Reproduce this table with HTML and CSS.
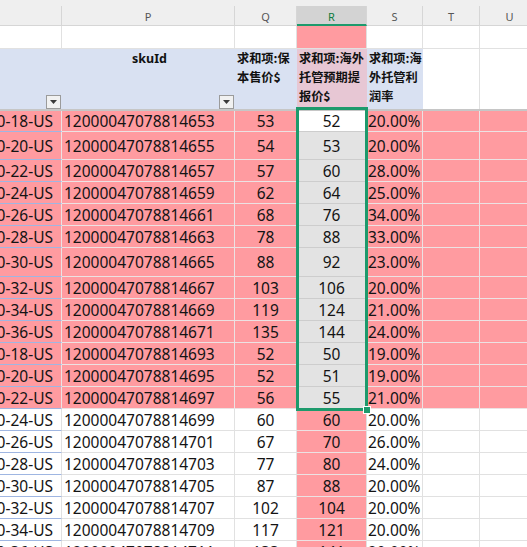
FILE: index.html
```html
<!DOCTYPE html>
<html lang="zh-CN">
<head>
<meta charset="utf-8">
<title>Sheet</title>
<link rel="stylesheet" href="styles.css">
</head>
<body>
<div class="sheet">
  <div class="row colhead">
    <div class="c"></div>
    <div class="c">P</div>
    <div class="c">Q</div>
    <div class="c cur">R</div>
    <div class="c">S</div>
    <div class="c">T</div>
    <div class="c">U</div>
  </div>
  <div class="row r1">
    <div class="c"></div><div class="c"></div><div class="c"></div><div class="c r"></div><div class="c"></div><div class="c"></div><div class="c"></div>
  </div>
  <div class="row ph">
    <div class="c a"><span class="filter"><svg width="7" height="4" viewBox="0 0 7 4"><path d="M0 0h7L3.5 4z" fill="#3a3a3a"/></svg></span></div>
    <div class="c p"><span class="lbl">skuId</span><span class="filter"><svg width="7" height="4" viewBox="0 0 7 4"><path d="M0 0h7L3.5 4z" fill="#3a3a3a"/></svg></span></div>
    <div class="c q">求和项:保本售价$</div>
    <div class="c r">求和项:海外托管预期提报价$</div>
    <div class="c s">求和项:海外托管利润率</div>
    <div class="c t"></div>
    <div class="c u"></div>
  </div>
  <div class="freeze"></div>
  <div class="data">
    <div class="row pk h21"><div class="c a">0-18-US</div><div class="c p">12000047078814653</div><div class="c q">53</div><div class="c r act">52</div><div class="c s">20.00%</div><div class="c t"></div><div class="c u"></div></div>
    <div class="row pk h28"><div class="c a">0-20-US</div><div class="c p">12000047078814655</div><div class="c q">54</div><div class="c r sel">53</div><div class="c s">20.00%</div><div class="c t"></div><div class="c u"></div></div>
    <div class="row pk h22"><div class="c a">0-22-US</div><div class="c p">12000047078814657</div><div class="c q">57</div><div class="c r sel">60</div><div class="c s">28.00%</div><div class="c t"></div><div class="c u"></div></div>
    <div class="row pk h22"><div class="c a">0-24-US</div><div class="c p">12000047078814659</div><div class="c q">62</div><div class="c r sel">64</div><div class="c s">25.00%</div><div class="c t"></div><div class="c u"></div></div>
    <div class="row pk h22"><div class="c a">0-26-US</div><div class="c p">12000047078814661</div><div class="c q">68</div><div class="c r sel">76</div><div class="c s">34.00%</div><div class="c t"></div><div class="c u"></div></div>
    <div class="row pk h22"><div class="c a">0-28-US</div><div class="c p">12000047078814663</div><div class="c q">78</div><div class="c r sel">88</div><div class="c s">33.00%</div><div class="c t"></div><div class="c u"></div></div>
    <div class="row pk h29"><div class="c a">0-30-US</div><div class="c p">12000047078814665</div><div class="c q">88</div><div class="c r sel">92</div><div class="c s">23.00%</div><div class="c t"></div><div class="c u"></div></div>
    <div class="row pk h22"><div class="c a">0-32-US</div><div class="c p">12000047078814667</div><div class="c q">103</div><div class="c r sel">106</div><div class="c s">20.00%</div><div class="c t"></div><div class="c u"></div></div>
    <div class="row pk h22"><div class="c a">0-34-US</div><div class="c p">12000047078814669</div><div class="c q">119</div><div class="c r sel">124</div><div class="c s">21.00%</div><div class="c t"></div><div class="c u"></div></div>
    <div class="row pk h22"><div class="c a">0-36-US</div><div class="c p">12000047078814671</div><div class="c q">135</div><div class="c r sel">144</div><div class="c s">24.00%</div><div class="c t"></div><div class="c u"></div></div>
    <div class="row pk h22"><div class="c a">0-18-US</div><div class="c p">12000047078814693</div><div class="c q">52</div><div class="c r sel">50</div><div class="c s">19.00%</div><div class="c t"></div><div class="c u"></div></div>
    <div class="row pk h22"><div class="c a">0-20-US</div><div class="c p">12000047078814695</div><div class="c q">52</div><div class="c r sel">51</div><div class="c s">19.00%</div><div class="c t"></div><div class="c u"></div></div>
    <div class="row pk h22"><div class="c a">0-22-US</div><div class="c p">12000047078814697</div><div class="c q">56</div><div class="c r sel">55</div><div class="c s">21.00%</div><div class="c t"></div><div class="c u"></div></div>
    <div class="row wh h22"><div class="c a">0-24-US</div><div class="c p">12000047078814699</div><div class="c q">60</div><div class="c r">60</div><div class="c s">20.00%</div><div class="c t"></div><div class="c u"></div></div>
    <div class="row wh h22"><div class="c a">0-26-US</div><div class="c p">12000047078814701</div><div class="c q">67</div><div class="c r">70</div><div class="c s">26.00%</div><div class="c t"></div><div class="c u"></div></div>
    <div class="row wh h22"><div class="c a">0-28-US</div><div class="c p">12000047078814703</div><div class="c q">77</div><div class="c r">80</div><div class="c s">24.00%</div><div class="c t"></div><div class="c u"></div></div>
    <div class="row wh h22"><div class="c a">0-30-US</div><div class="c p">12000047078814705</div><div class="c q">87</div><div class="c r">88</div><div class="c s">20.00%</div><div class="c t"></div><div class="c u"></div></div>
    <div class="row wh h22"><div class="c a">0-32-US</div><div class="c p">12000047078814707</div><div class="c q">102</div><div class="c r">104</div><div class="c s">20.00%</div><div class="c t"></div><div class="c u"></div></div>
    <div class="row wh h22"><div class="c a">0-34-US</div><div class="c p">12000047078814709</div><div class="c q">117</div><div class="c r">121</div><div class="c s">20.00%</div><div class="c t"></div><div class="c u"></div></div>
    <div class="row wh h22"><div class="c a">0-36-US</div><div class="c p">12000047078814711</div><div class="c q">133</div><div class="c r">141</div><div class="c s">20.00%</div><div class="c t"></div><div class="c u"></div></div>
  </div>
  <div class="selbox"><span class="handle"></span></div>
</div>
</body>
</html>
```

FILE: styles.css
```css
* { box-sizing: border-box; }

body {
  margin: 0;
  background: #ffffff;
  font-family: "Noto Sans", "Noto Sans CJK SC", sans-serif;
  color: #141414;
  overflow: hidden;
}

.sheet {
  position: relative;
  width: 527px;
  height: 547px;
  overflow: hidden;
}

.row {
  display: grid;
  grid-template-columns: 62px 173px 62px 70px 56px 57px 60px;
  width: 540px;
}

/* column letters */
.colhead {
  background: #efefef;
  padding-top: 6px;
}
.colhead .c {
  height: 20px;
  border-right: 1px solid #d6d6d6;
  border-bottom: 1px solid #d6d6d6;
  display: flex;
  align-items: center;
  justify-content: center;
  padding-top: 2px;
  font-size: 11px;
  color: #565656;
}
.colhead .cur {
  background: #d3d3d3;
  color: #107c41;
  border-bottom: 2px solid #1d9a6c;
}

/* first sheet row */
.r1 .c {
  height: 23px;
  border-right: 1px solid #e1e1e1;
  border-bottom: 1px solid #e1e1e1;
}
.r1 .r { background: #ff9ba0; }

/* pivot header */
.ph { height: 60px; }
.ph .c {
  background: #d9e1f2;
  font-family: "Noto Sans CJK SC", sans-serif;
  font-weight: 700;
  font-size: 12.2px;
  line-height: 19px;
  padding: 0 0 0 2px;
  color: #111;
  line-break: anywhere;
}
.ph .r { background: #e7c7d4; }
.ph .t, .ph .u {
  background: #ffffff;
  border-right: 1px solid #e1e1e1;
}
.ph .a, .ph .p {
  display: flex;
  flex-direction: column;
  align-items: center;
  padding: 0;
}
.ph .lbl {
  font-family: "Noto Sans", sans-serif;
  font-size: 12.5px;
  line-height: 19px;
  padding-left: 2px;
}
.filter {
  margin-top: auto;
  align-self: flex-end;
  margin-right: 1px;
  width: 15px;
  height: 14px;
  border: 1px solid #9b9b9b;
  background: #f1f1f1;
  display: flex;
  align-items: center;
  justify-content: center;
}
.filter svg { display: block; }

.freeze {
  height: 2px;
  width: 540px;
  background: #c6c6c6;
}

/* data rows */
.h21 { height: 21px; }
.h22 { height: 22px; }
.h28 { height: 28px; }
.h29 { height: 29px; }

.data .c {
  border-right: 1px solid #e1e1e1;
  border-bottom: 1px solid #e1e1e1;
  display: flex;
  align-items: center;
  font-size: 15.5px;
  white-space: nowrap;
  overflow: hidden;
}
.pk .c {
  background: #ff9ba0;
  border-color: #ece2e3;
}
.wh .c {
  background: #ffffff;
  border-color: #e1e1e1;
}
.data .a {
  justify-content: flex-end;
  padding-right: 8px;
}
.pk .a, .wh .a { border-bottom-color: #9fb6e2; }
.data .p { padding-left: 2px; }
.data .q, .data .r { justify-content: center; }
.data .s { padding-left: 1px; }

.wh .r { background: #ff9ba0; border-bottom-color: #ece2e3; }
.pk .sel {
  background: #e3e3e3;
  border-color: #cdcdcd;
}
.pk .act {
  background: #ffffff;
  border-color: #cdcdcd;
}

/* selection outline */
.selbox {
  position: absolute;
  left: 296px;
  top: 107px;
  width: 72px;
  height: 304px;
  border: 3px solid #1d9a6c;
  pointer-events: none;
}
.handle {
  position: absolute;
  right: -6px;
  bottom: -6px;
  width: 8px;
  height: 8px;
  background: #1d9a6c;
  border: 1px solid #ffffff;
}
```
